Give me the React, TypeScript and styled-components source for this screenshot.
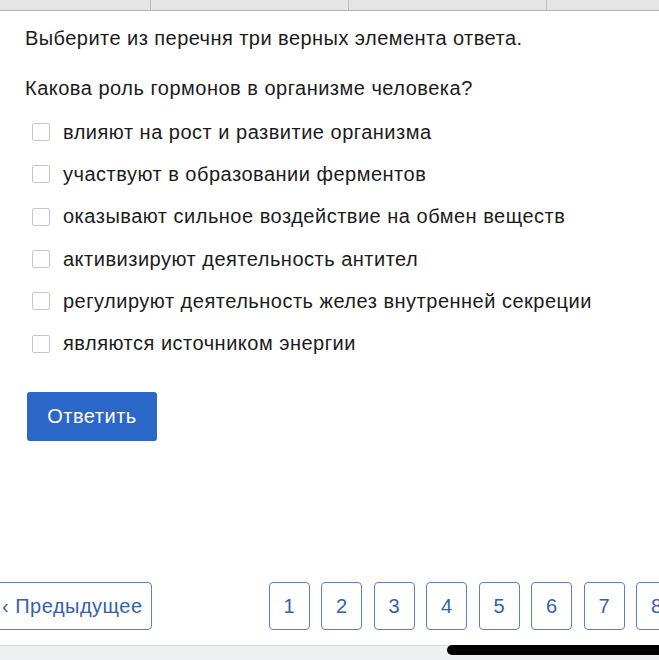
import React, { useState } from 'react'
import styled, { createGlobalStyle } from 'styled-components'

const GlobalStyle = createGlobalStyle`
  html, body {
    margin: 0;
    padding: 0;
    background: #ffffff;
  }
  body {
    font-family: "Liberation Sans", Arial, sans-serif;
  }
`

const Page = styled.div`
  width: 659px;
  height: 660px;
  display: flex;
  flex-direction: column;
  overflow: hidden;
  color: #1b1b1b;
  font-size: 20px;
  letter-spacing: 0.5px;
`

const TopBar = styled.div`
  display: grid;
  grid-template-columns: 151px 198px 198px 1fr;
  height: 10px;
  background: #e5e5e5;
  border-bottom: 1px solid #b4b4b4;
  flex-shrink: 0;
`

const TopCell = styled.div`
  border-right: 1px solid #bdbdbd;
  &:last-child {
    border-right: none;
  }
`

const Content = styled.div`
  padding-left: 25px;
  display: flex;
  flex-direction: column;
`

const Instruction = styled.div`
  margin-top: 15px;
  line-height: 24px;
  letter-spacing: 0.45px;
`

const Question = styled.div`
  margin-top: 26px;
  line-height: 24px;
`

const Options = styled.div`
  margin-top: 11px;
  display: flex;
  flex-direction: column;
`

const OptionRow = styled.label`
  height: 42.3px;
  display: flex;
  align-items: center;
  gap: 13px;
  padding-left: 7px;
  cursor: pointer;
`

const Box = styled.span<{ $checked: boolean }>`
  width: 18px;
  height: 18px;
  box-sizing: border-box;
  border: 1.5px solid #c6c6c6;
  border-radius: 2px;
  background: ${p => (p.$checked ? '#2b66c9' : '#ffffff')};
  flex-shrink: 0;
`

const SubmitButton = styled.button`
  margin-top: 27px;
  margin-left: 2px;
  width: 130px;
  height: 49px;
  border: none;
  border-radius: 3px;
  background: #2b66c9;
  color: #ffffff;
  font-family: "Liberation Sans", Arial, sans-serif;
  font-size: 20px;
  letter-spacing: 0.5px;
  align-self: flex-start;
  cursor: pointer;
`

const Spacer = styled.div`
  flex: 1;
`

const Pagination = styled.div`
  display: flex;
  align-items: center;
  height: 48px;
  margin-bottom: 15px;
  flex-shrink: 0;
`

const NavButton = styled.button`
  margin-left: -4px;
  width: 156px;
  height: 48px;
  box-sizing: border-box;
  border: 1.5px solid #5a80c6;
  border-radius: 4px;
  background: #ffffff;
  color: #3560ad;
  font-family: "Liberation Sans", Arial, sans-serif;
  font-size: 20px;
  letter-spacing: 0.5px;
  padding: 0 0 0 5px;
  text-align: left;
  white-space: nowrap;
  flex-shrink: 0;
`

const Pages = styled.div`
  margin-left: 116.5px;
  display: flex;
  gap: 11.5px;
`

const PageButton = styled.button`
  width: 41px;
  height: 48px;
  box-sizing: border-box;
  border: 1.5px solid #5a80c6;
  border-radius: 4px;
  background: #ffffff;
  color: #3560ad;
  font-family: "Liberation Sans", Arial, sans-serif;
  font-size: 20px;
  padding: 0;
  flex-shrink: 0;
`

const BottomBar = styled.div`
  height: 14px;
  background: #eef0f2;
  border-top: 1px solid #d6d8da;
  display: flex;
  flex-shrink: 0;
`

const HomeIndicator = styled.div`
  margin-top: -1px;
  margin-left: auto;
  margin-right: -30px;
  width: 242px;
  height: 10px;
  border-radius: 5px;
  background: #000000;
`

const options = [
  'влияют на рост и развитие организма',
  'участвуют в образовании ферментов',
  'оказывают сильное воздействие на обмен веществ',
  'активизируют деятельность антител',
  'регулируют деятельность желез внутренней секреции',
  'являются источником энергии',
]

export default function App() {
  const [checked, setChecked] = useState<boolean[]>(options.map(() => false))

  const toggle = (i: number) => {
    setChecked(prev => prev.map((v, j) => (j === i ? !v : v)))
  }

  return (
    <>
      <GlobalStyle />
      <Page>
        <TopBar>
          <TopCell />
          <TopCell />
          <TopCell />
          <TopCell />
        </TopBar>
        <Content>
          <Instruction>Выберите из перечня три верных элемента ответа.</Instruction>
          <Question>Какова роль гормонов в организме человека?</Question>
          <Options>
            {options.map((text, i) => (
              <OptionRow key={i} onClick={() => toggle(i)}>
                <Box $checked={checked[i]} />
                {text}
              </OptionRow>
            ))}
          </Options>
          <SubmitButton>Ответить</SubmitButton>
        </Content>
        <Spacer />
        <Pagination>
          <NavButton>‹ Предыдущее</NavButton>
          <Pages>
            {[1, 2, 3, 4, 5, 6, 7, 8].map(n => (
              <PageButton key={n}>{n}</PageButton>
            ))}
          </Pages>
        </Pagination>
        <BottomBar>
          <HomeIndicator />
        </BottomBar>
      </Page>
    </>
  )
}
